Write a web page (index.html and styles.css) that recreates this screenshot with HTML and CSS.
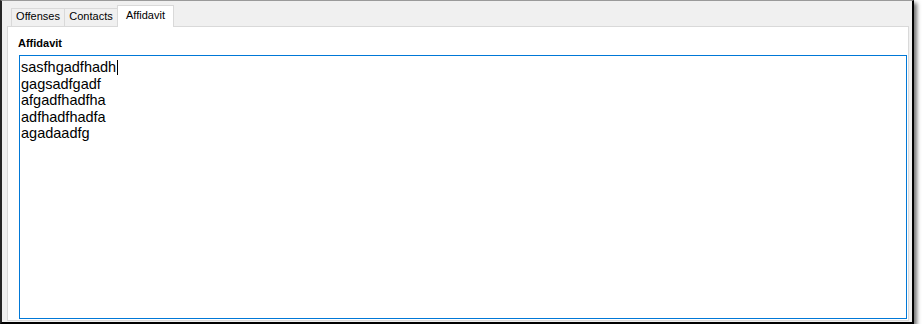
FILE: index.html
```html
<!DOCTYPE html>
<html>
<head>
  <title>Affidavit</title>
  <link rel="stylesheet" href="styles.css">
</head>
<body>

  <div class="window">
    <div class="tab-strip">
      <div class="tab">Offenses</div>
      <div class="tab">Contacts</div>
      <div class="tab selected">Affidavit</div>
    </div>

    <div class="tab-page">
      <div class="field-label">Affidavit</div>
      <div class="text-box">
        <div>sasfhgadfhadh<span class="caret"></span></div>
        <div>gagsadfgadf</div>
        <div>afgadfhadfha</div>
        <div>adfhadfhadfa</div>
        <div>agadaadfg</div>
      </div>
    </div>
  </div>

</body>
</html>
```

FILE: styles.css
```css
body {
  margin: 0;
  background: #fff;
  font-family: "Liberation Sans", Arial, sans-serif;
}

.window {
  width: 910px;
  height: 321px;
  background: #f0f0f0;
  border: 2px solid #000;
  border-top: 1px solid #9a9a9a;
  border-left-color: #262626;
  box-shadow: 3px 3px 4px rgba(0, 0, 0, 0.55);
  display: flex;
  flex-direction: column;
}

/* tab headers */
.tab-strip {
  display: flex;
  align-items: flex-end;
  height: 25px;
  padding-left: 9px;
}
.tab {
  height: 17px;
  width: 52px;
  border: 1px solid #d9d9d9;
  border-bottom: none;
  margin-left: -1px;
  font-size: 11px;
  line-height: 15px;
  color: #000;
  text-align: center;
}
.tab:first-child {
  margin-left: 0;
}
.tab.selected {
  position: relative;
  z-index: 1;
  width: 55px;
  height: 19px;
  padding-top: 2px;
  margin-bottom: -1px;
  background: #fff;
}

/* page body */
.tab-page {
  width: 890px;
  height: 285px;
  margin-left: 5px;
  padding: 8px 0 0 10px;
  background: #fff;
  border: 1px solid #d9d9d9;
}
.field-label {
  font-size: 11px;
  font-weight: bold;
  line-height: 16px;
  color: #000;
}
.text-box {
  box-sizing: border-box;
  width: 888px;
  height: 264px;
  margin: 4px 0 0 1px;
  padding: 3px 1px;
  border: 1px solid #0078d7;
  font-size: 14.5px;
  line-height: 16.6px;
  color: #000;
}
.caret {
  display: inline-block;
  width: 1px;
  height: 15px;
  margin-left: 1px;
  background: #000;
  vertical-align: -3px;
}
```
